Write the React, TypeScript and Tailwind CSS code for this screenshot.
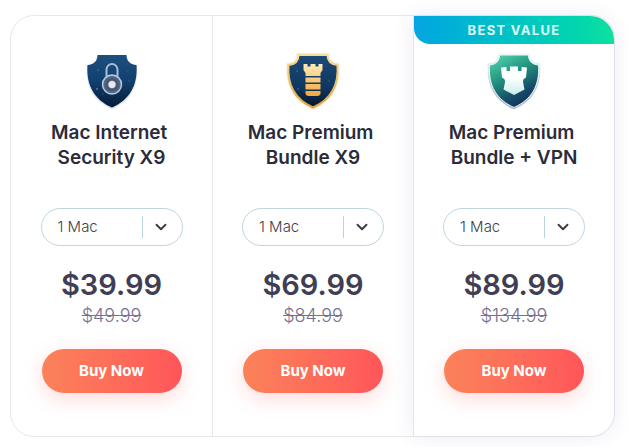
import React from 'react';
import { ChevronDown } from 'lucide-react';

const SHIELD =
    'M13.500 3H42.500C42.500 9 46 12.500 52.500 13C54 34 45 48 28 55.500C11 48 2 34 3.500 13C10 12.500 13.500 9 13.500 3Z';

const LockShield = () => (
    <svg viewBox="0 0 56 58" className="h-[58px] w-14" aria-hidden="true">
        <defs>
            <linearGradient id="lock-bg" x1="0" y1="0" x2="0" y2="1">
                <stop offset="0" stopColor="#1d4f7e" />
                <stop offset="0.5" stopColor="#10406f" />
                <stop offset="1" stopColor="#071a35" />
            </linearGradient>
            <radialGradient id="lock-dial">
                <stop offset="0.3" stopColor="#9da9ba" />
                <stop offset="0.5" stopColor="#3f5270" />
                <stop offset="1" stopColor="#5f7594" />
            </radialGradient>
        </defs>
        <path d={SHIELD} transform="translate(0 1)" fill="#9fb0c4" stroke="#dfe5ec" strokeWidth="1.500" />
        <path d={SHIELD} fill="url(#lock-bg)" />
        <g fill="#6f9cc4" opacity="0.7">
            <circle cx="14" cy="18" r="0.700" />
            <circle cx="45" cy="29" r="0.600" />
            <circle cx="13" cy="37" r="0.900" />
            <circle cx="43" cy="19" r="0.500" />
            <circle cx="19" cy="42" r="0.500" />
        </g>
        <path d="M22.500 25V17.500a5.500 5.500 0 0 1 11 0V25" fill="none" stroke="#a9bdd2" strokeWidth="2" />
        <circle cx="28" cy="32.500" r="9.500" fill="url(#lock-dial)" stroke="#bccbdb" strokeWidth="1.500" />
        <circle cx="28" cy="32.500" r="3.500" fill="#e6eaef" />
    </svg>
);

const TowerShield = () => (
    <svg viewBox="0 0 56 58" className="h-[58px] w-14" aria-hidden="true">
        <defs>
            <linearGradient id="tower-bg" x1="0" y1="0" x2="0" y2="1">
                <stop offset="0" stopColor="#1c4a76" />
                <stop offset="0.6" stopColor="#103861" />
                <stop offset="1" stopColor="#061428" />
            </linearGradient>
            <linearGradient id="tower-rim" x1="0" y1="0" x2="0" y2="1">
                <stop offset="0" stopColor="#f9dc94" />
                <stop offset="1" stopColor="#dca347" />
            </linearGradient>
            <linearGradient id="tower-gold" x1="0" y1="0" x2="0" y2="1">
                <stop offset="0" stopColor="#ffeab8" />
                <stop offset="1" stopColor="#f2a83a" />
            </linearGradient>
        </defs>
        <path d={SHIELD} fill="url(#tower-bg)" stroke="#fbebc6" strokeWidth="4" />
        <path d={SHIELD} fill="url(#tower-bg)" stroke="url(#tower-rim)" strokeWidth="2" />
        <g fill="#6f9cc4" opacity="0.7">
            <circle cx="12" cy="19" r="0.700" />
            <circle cx="44" cy="29" r="0.600" />
            <circle cx="13" cy="37" r="0.800" />
        </g>
        <path
            d="M18.500 12h4v2.500h3V12h5v2.500h3V12h4v6l-2 3v3h-15v-3l-2-3zM20.500 25.500h15v5h-15zM20.500 32h15v5.500h-15zM20.500 39h15v3q-1 2-3 2h-9q-2 0-3-2z"
            fill="url(#tower-gold)"
        />
    </svg>
);

const VpnShield = () => (
    <svg viewBox="0 0 56 58" className="h-[58px] w-14" aria-hidden="true">
        <defs>
            <linearGradient id="vpn-bg" x1="0.2" y1="0" x2="0.7" y2="1">
                <stop offset="0" stopColor="#4fd0ab" />
                <stop offset="0.4" stopColor="#22907f" />
                <stop offset="0.75" stopColor="#164a69" />
                <stop offset="1" stopColor="#142b55" />
            </linearGradient>
            <linearGradient id="vpn-rim" x1="0" y1="0" x2="0" y2="1">
                <stop offset="0" stopColor="#e6fbf4" />
                <stop offset="1" stopColor="#a9b5c4" />
            </linearGradient>
            <linearGradient id="vpn-tower" x1="0" y1="0" x2="0" y2="1">
                <stop offset="0.4" stopColor="#ffffff" />
                <stop offset="1" stopColor="#c9ecea" />
            </linearGradient>
        </defs>
        <path d={SHIELD} fill="#ffffff" stroke="url(#vpn-rim)" strokeWidth="3.500" />
        <path d={SHIELD} fill="url(#vpn-bg)" stroke="#eef7f6" strokeWidth="1" />
        <path
            d="M15 15.500L20.500 15V19H24V14.500H32V19H35.500V15L41 15.500 40 25.500Q36.500 27 37 30L38.500 37.500 28 43 17.500 37.500 19 30Q19.500 27 16 25.500Z"
            fill="url(#vpn-tower)"
        />
    </svg>
);

const plans = [
    { id: 'security', title: ['Mac Internet', 'Security X9'], price: '$39.99', oldPrice: '$49.99', Icon: LockShield },
    { id: 'premium', title: ['Mac Premium', 'Bundle X9'], price: '$69.99', oldPrice: '$84.99', Icon: TowerShield },
    { id: 'vpn', title: ['Mac Premium', 'Bundle + VPN'], price: '$89.99', oldPrice: '$134.99', Icon: VpnShield, best: true },
];

type Plan = (typeof plans)[number];

const PlanCard = ({ plan }: { plan: Plan }) => {
    const { id, title, price, oldPrice, Icon, best } = plan;

    return (
        <section
            className={
                best
                    ? 'flex flex-col items-center rounded-r-3xl border-l border-[#e4e4ec] bg-white pb-[43px] shadow-[0_0_20px_rgba(90,90,170,0.12)]'
                    : 'flex flex-col items-center border-l border-[#e6e6ea] pb-[43px] first:border-l-0'
            }
        >
            <div className="h-7 w-full">
                {best && (
                    <p className="rounded-tr-3xl rounded-bl-2xl bg-linear-to-r from-[#06a5e0] to-[#0fe0a0] text-center text-[13px] leading-7 font-bold tracking-widest text-[#e0fbf8]">
                        BEST VALUE
                    </p>
                )}
            </div>

            <div className="mt-2">
                <Icon />
            </div>

            <h2 id={`${id}-title`} className="mt-[10px] text-center text-[19px] leading-[25px] font-semibold text-[#2b2b3a]">
                {title[0]}&nbsp;
                <br />
                {title[1]}
            </h2>

            <div className="relative mt-[38px]">
                <select
                    aria-labelledby={`${id}-title`}
                    className="h-[38px] w-[142px] appearance-none rounded-full border border-[#bfd6df] bg-white pl-4 text-[15px] font-light text-[#3f3f4c]"
                >
                    <option>1 Mac</option>
                    <option>2 Macs</option>
                    <option>3 Macs</option>
                </select>
                <div className="pointer-events-none absolute inset-y-2 right-0 flex w-[41px] items-center border-l border-[#b9d3df] pl-[9px]">
                    <ChevronDown size={18} strokeWidth={2.5} className="text-[#3a3a44]" />
                </div>
            </div>

            <p className="mt-5 text-[29px] leading-[38px] font-semibold text-[#403e54]">{price}</p>
            <p className="text-[18px] leading-6 font-light text-[#77718f] line-through">{oldPrice}</p>

            <button
                type="button"
                className="mt-[21px] h-11 w-[140px] rounded-full bg-linear-to-r from-[#fb8259] to-[#ff5559] text-[15px] font-bold text-white shadow-[0_6px_20px_rgba(255,90,85,0.22)]"
            >
                Buy Now
            </button>
        </section>
    );
};

const App = () => {
    return (
        <main className="min-h-screen bg-white pt-[15px] pr-[13px] pb-[10px] pl-[10px] font-['Inter',sans-serif]">
            <div className="grid grid-cols-3 rounded-3xl border border-[#e8e8ec]">
                {plans.map((plan) => (
                    <PlanCard key={plan.id} plan={plan} />
                ))}
            </div>
        </main>
    );
};

export default App;
